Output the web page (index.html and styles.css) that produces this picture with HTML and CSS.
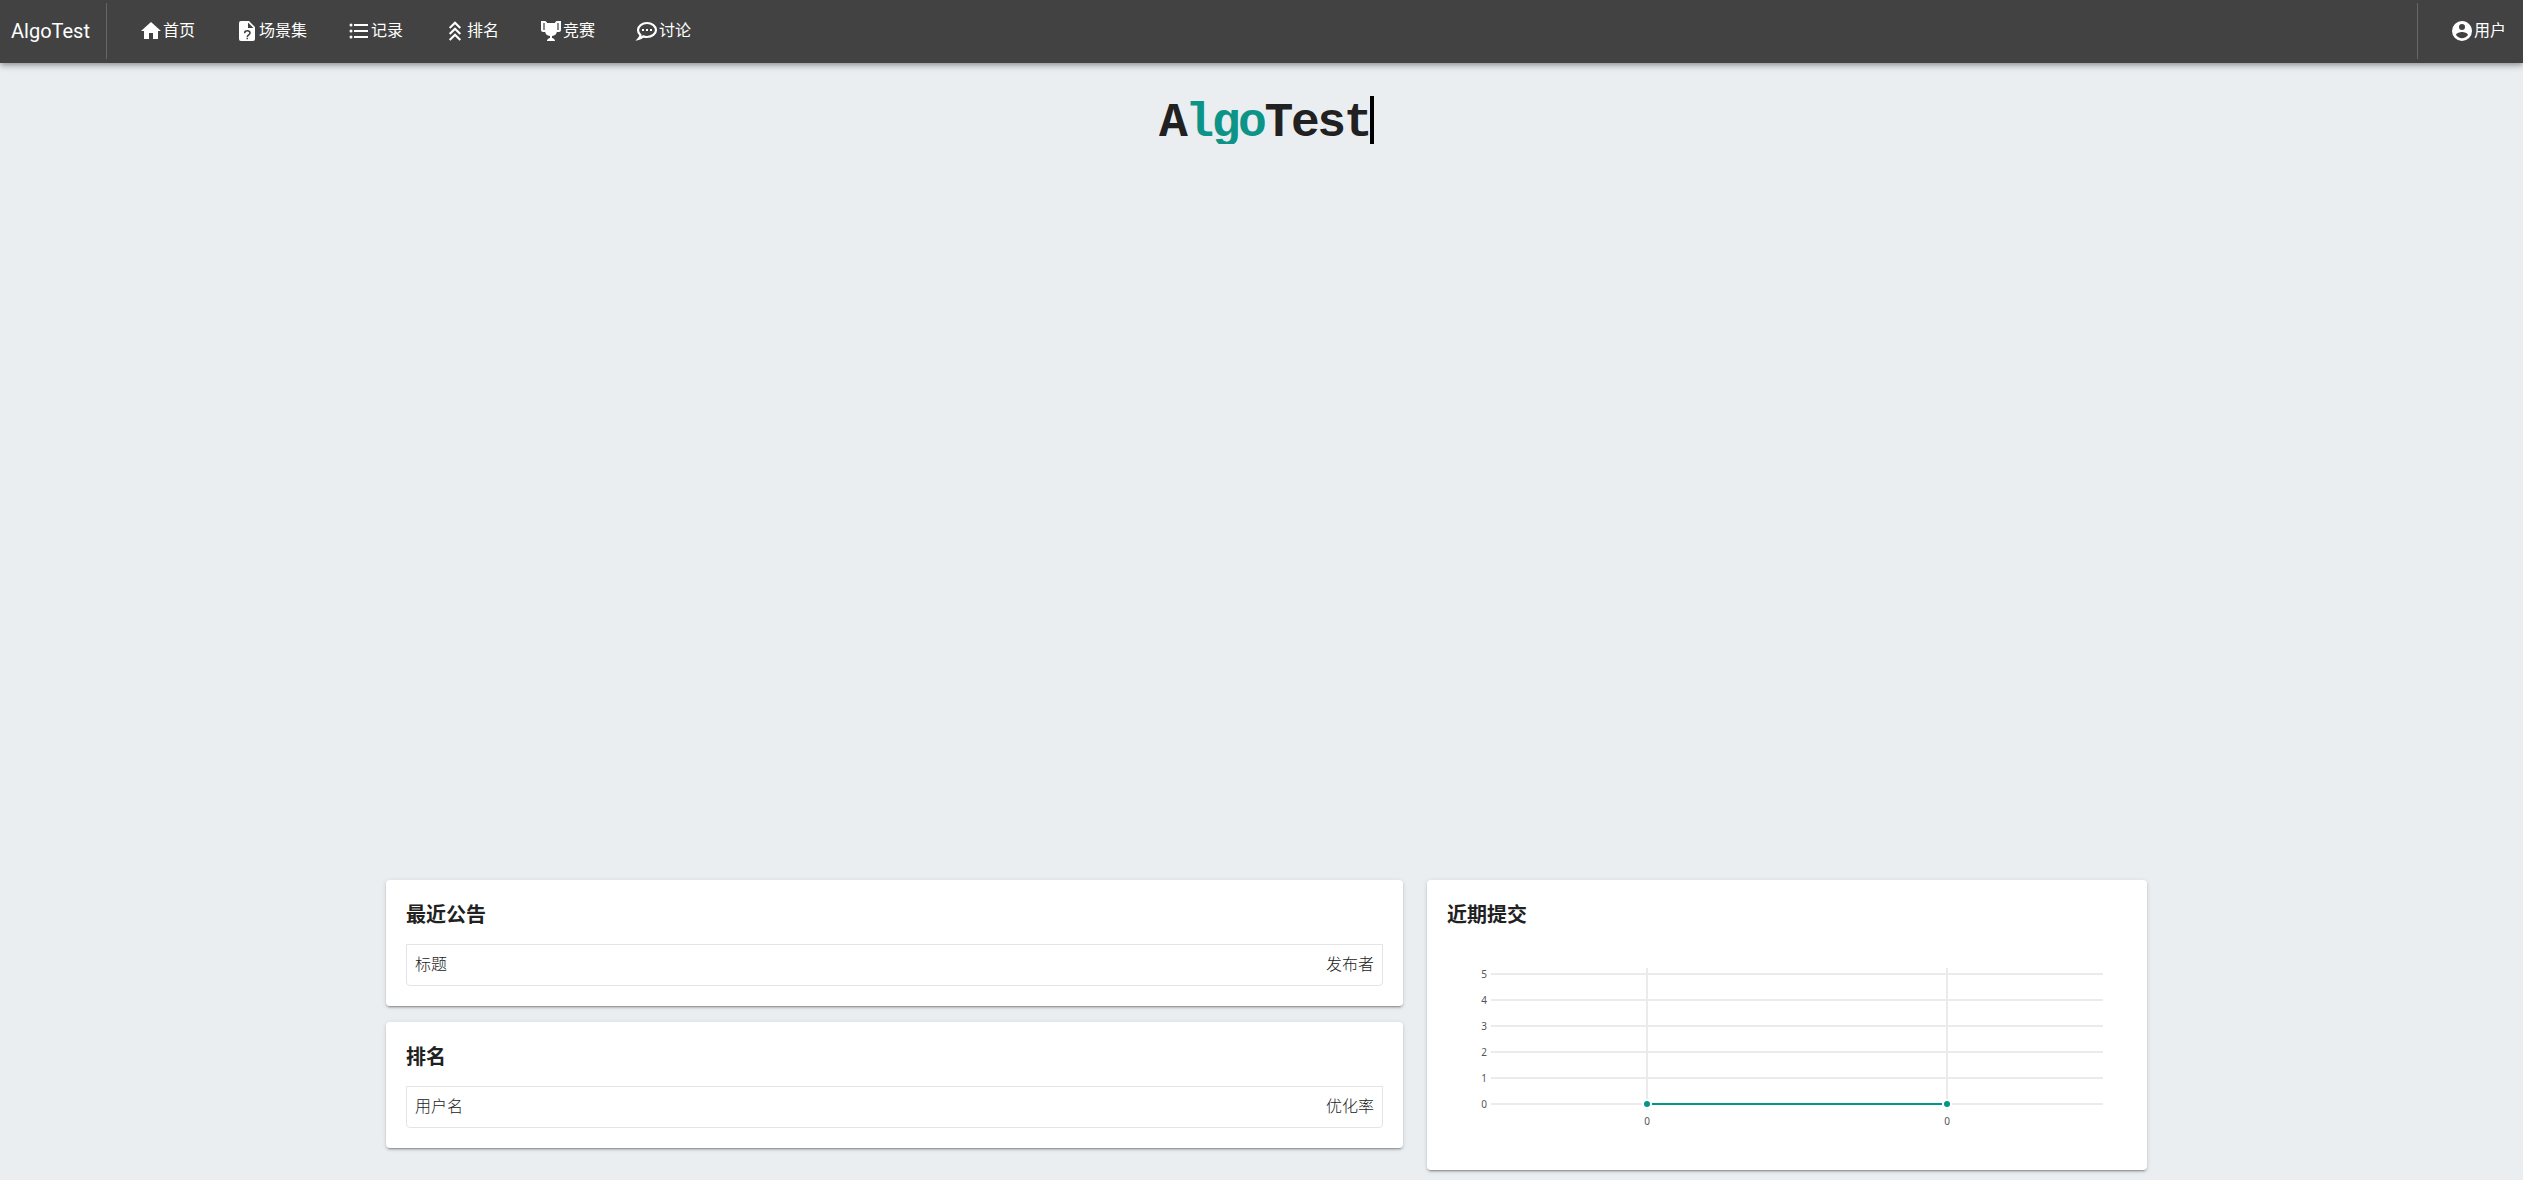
FILE: index.html
```html
<!DOCTYPE html>
<html lang="zh-CN">
<head>
<meta charset="utf-8">
<title>AlgoTest</title>
<link rel="stylesheet" href="styles.css">
</head>
<body>
<header class="navbar">
  <a class="brand">AlgoTest</a>
  <nav class="menu">
    <a class="item"><svg class="icon" viewBox="0 0 24 24"><path d="M10 20V14H14V20H19V12H22L12 3L2 12H5V20H10Z"/></svg>首页</a>
    <a class="item"><svg class="icon" viewBox="0 0 24 24"><path fill-rule="evenodd" d="M14 2H6A2 2 0 0 0 4 4V20A2 2 0 0 0 6 22H18A2 2 0 0 0 20 20V8L14 2ZM13 3.5L18.5 9H13V3.5Z"/><path class="mark" d="M9.6 14.2C9.6 10.7 15 10.9 15 14C15 15.9 12.3 15.9 12.3 18M12.3 18.8V20.2"/></svg>场景集</a>
    <a class="item"><svg class="icon" viewBox="0 0 24 24"><path d="M7 5H21V7H7V5M7 13V11H21V13H7M4 4.5A1.5 1.5 0 1 1 4 7.5A1.5 1.5 0 0 1 4 4.5M4 10.5A1.5 1.5 0 1 1 4 13.5A1.5 1.5 0 0 1 4 10.5M7 19V17H21V19H7M4 16.5A1.5 1.5 0 1 1 4 19.5A1.5 1.5 0 0 1 4 16.5Z"/></svg>记录</a>
    <a class="item"><svg class="icon" viewBox="0 0 24 24"><path class="stroke" d="M6.7 9L12 3.7L17.3 9M6.7 15L12 9.7L17.3 15M6.7 21L12 15.7L17.3 21"/></svg>排名</a>
    <a class="item"><svg class="icon" viewBox="0 0 24 24"><path class="handle" d="M4 4H6V11H4ZM18 4H20V11H18Z"/><path d="M18 2C17.1 2 16 3 16 4H8C8 3 6.9 2 6 2H2V11C2 12 3 13 4 13H6.2C6.6 15 7.9 16.7 11 17V19.08C8 19.54 8 22 8 22H16S16 19.54 13 19.08V17C16.1 16.7 17.4 15 17.8 13H20C21 13 22 12 22 11V2H18M6 11H4V4H6V11M20 11H18V4H20V11Z"/></svg>竞赛</a>
    <a class="item"><svg class="icon" viewBox="0 0 24 24"><path class="stroke" d="M12 4C16.9 4 21 7.1 21 11S16.9 18 12 18C10.6 18 9.3 17.8 8.2 17.4C6.7 18.8 5 19.6 3.5 19.9C4.7 18.6 5.4 17.3 5.5 16.2C3.9 14.9 3 13 3 11C3 7.1 7.1 4 12 4Z"/><path d="M7 10H9V12H7ZM11 10H13V12H11ZM15 10H17V12H15Z"/></svg>讨论</a>
  </nav>
  <a class="item user"><svg class="icon" viewBox="0 0 24 24"><path d="M12 19.2C9.5 19.2 7.29 17.92 6 16C6.03 14 10 12.9 12 12.9S17.97 14 18 16C16.71 17.92 14.5 19.2 12 19.2M12 5A3 3 0 0 1 15 8A3 3 0 0 1 12 11A3 3 0 0 1 9 8A3 3 0 0 1 12 5M12 2A10 10 0 0 0 2 12A10 10 0 0 0 12 22A10 10 0 0 0 22 12C22 6.47 17.5 2 12 2Z"/></svg>用户</a>
</header>
<main class="page">
  <section class="hero"><h1 class="typed">A<span class="accent">lgo</span>Test</h1></section>
  <div class="columns">
    <div class="stack">
      <section class="card">
        <h2>最近公告</h2>
        <div class="row"><span>标题</span><span>发布者</span></div>
      </section>
      <section class="card">
        <h2>排名</h2>
        <div class="row"><span>用户名</span><span>优化率</span></div>
      </section>
    </div>
    <section class="card">
      <h2>近期提交</h2>
      <svg class="chart" viewBox="0 0 680 206" width="680" height="206">
        <path class="grid" d="M44 30H656M44 56H656M44 82H656M44 108H656M44 134H656M44 160H656M200 24V166M500 24V166"/>
        <path class="series" d="M200 160H500"/>
        <circle class="point" cx="200" cy="160" r="4"/>
        <circle class="point" cx="500" cy="160" r="4"/>
        <g class="labels labels-y">
          <text x="40" y="33.5">5</text><text x="40" y="59.5">4</text><text x="40" y="85.5">3</text><text x="40" y="111.5">2</text><text x="40" y="137.5">1</text><text x="40" y="163.5">0</text>
        </g>
        <g class="labels labels-x"><text x="200" y="180.5">0</text><text x="500" y="180.5">0</text></g>
      </svg>
    </section>
  </div>
</main>
</body>
</html>
```
FILE: styles.css
```css
* { box-sizing: border-box; }
body {
  margin: 0;
  height: 1180px;
  overflow: hidden;
  background: #eaeef1;
  color: #212121;
  font: 300 16px/24px Roboto, "Noto Sans CJK SC", sans-serif;
}
.navbar {
  position: relative;
  display: flex;
  align-items: center;
  height: 63px;
  padding: 0 17px 1px 11px;
  background: #424242;
  color: #fff;
  box-shadow: 0 2px 4px -1px rgba(0,0,0,.2), 0 4px 5px rgba(0,0,0,.14), 0 1px 10px rgba(0,0,0,.12);
}
.brand {
  width: 96px;
  height: 56px;
  border-right: 1px solid #666;
  font-size: 20px;
  font-weight: 400;
  line-height: 56px;
}
.menu { display: flex; flex: 1; gap: 40px; padding-left: 32px; }
.item { display: flex; align-items: center; height: 56px; font-weight: 400; }
.icon { width: 24px; height: 24px; fill: currentColor; }
.icon .stroke { fill: none; stroke: currentColor; stroke-width: 2.2; }
.icon .mark { fill: none; stroke: #424242; stroke-width: 1.5; }
.icon .handle { fill: #8a8a8a; }
.user { padding-left: 32px; border-left: 1px solid #666; }
.hero { display: flex; justify-content: center; height: 817px; padding: 33px 0 0 10px; }
.typed {
  height: 48px;
  margin: 0;
  overflow: hidden;
  border-right: 4px solid #000;
  font: bold 48px/55px "Liberation Mono", monospace;
  letter-spacing: -2.4px;
}
.accent { color: #0d9488; }
.columns { display: grid; grid-template-columns: 1017px 720px; gap: 24px; padding-left: 386px; align-items: start; }
.stack { display: grid; gap: 16px; }
.card {
  padding: 20px;
  border-radius: 4px;
  background: #fff;
  box-shadow: 0 3px 1px -2px rgba(0,0,0,.2), 0 2px 2px rgba(0,0,0,.14), 0 1px 5px rgba(0,0,0,.12);
}
.card h2 { height: 28px; margin: 0 0 16px; font: bold 20px/28px "Noto Sans CJK SC", sans-serif; }
.row {
  display: flex;
  justify-content: space-between;
  align-items: center;
  height: 42px;
  padding: 0 8px;
  border: 1px solid #e4e4e7;
  border-radius: 0 0 4px 4px;
}
.chart { display: block; }
.grid { fill: none; stroke: rgba(0,0,0,.08); stroke-width: 2; }
.series { stroke: #009688; stroke-width: 2; }
.point { fill: #009688; stroke: #fff; stroke-width: 2; }
.labels { fill: #555; font: 400 10px "Noto Sans", sans-serif; }
.labels-y { text-anchor: end; }
.labels-x { text-anchor: middle; }
```
